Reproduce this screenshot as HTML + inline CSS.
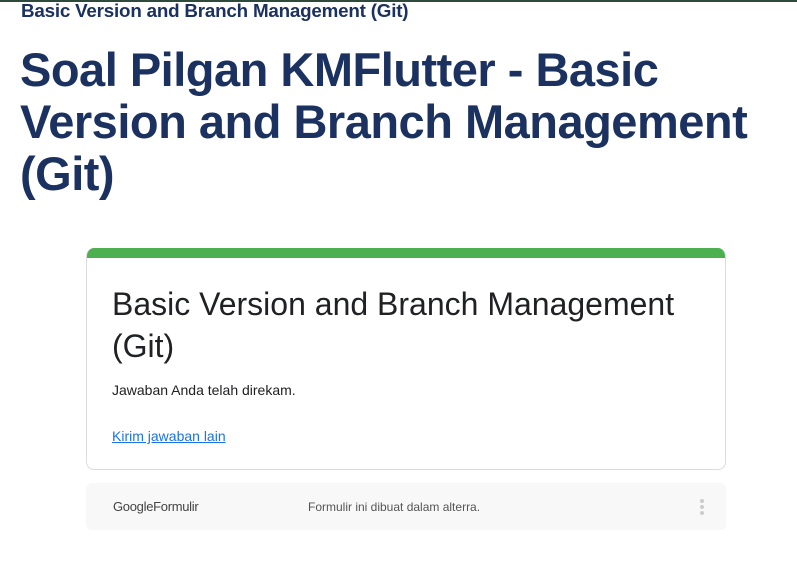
<!DOCTYPE html>
<html><head><meta charset="utf-8"><style>
body{margin:0;width:797px;height:566px;overflow:hidden;background:#fff;font-family:"Liberation Sans",sans-serif;position:relative}
.topline{position:absolute;left:0;top:0;width:797px;height:2px;background:#2d4a3a}
.sub{position:absolute;left:21px;top:0px;font-size:18.8px;font-weight:bold;color:#1b3160;letter-spacing:-0.2px}
.h1{position:absolute;left:20px;top:44px;font-size:47px;line-height:52px;font-weight:bold;color:#1b3160;letter-spacing:-0.5px;white-space:nowrap}
.card{position:absolute;left:86px;top:248px;width:638px;height:221px;border:1px solid #dadce0;border-radius:8px;border-top:none;overflow:hidden}
.bar{height:10px;background:#4caf50}
.ct{position:absolute;left:25px;top:35px;font-size:32px;line-height:42px;color:#202124;white-space:nowrap}
.msg{position:absolute;left:25px;top:134px;font-size:14px;color:#202124}
.lnk{position:absolute;left:25px;top:180px;font-size:14px;color:#1a73e8;text-decoration:underline}
.foot{position:absolute;left:86px;top:483px;width:640px;height:47px;background:#f8f8f8;border-radius:6px}
.g{position:absolute;left:27px;top:16px;font-size:13px;color:#444;letter-spacing:-0.3px}
.f{position:absolute;left:222px;top:17px;font-size:12px;color:#555}
.dots{position:absolute;left:614px;top:16px;width:4px}
.dots i{display:block;width:4px;height:4px;border-radius:2px;background:#ccc;margin-bottom:2px}
</style></head><body>
<div class="topline"></div>
<div class="sub">Basic Version and Branch Management (Git)</div>
<div class="h1">Soal Pilgan KMFlutter - Basic<br>Version and Branch Management<br>(Git)</div>
<div class="card"><div class="bar"></div>
<div class="ct">Basic Version and Branch Management<br>(Git)</div>
<div class="msg">Jawaban Anda telah direkam.</div>
<div class="lnk">Kirim jawaban lain</div>
</div>
<div class="foot"><div class="g">Google<span>Formulir</span></div><div class="f">Formulir ini dibuat dalam alterra.</div><div class="dots"><i></i><i></i><i></i></div></div>
</body></html>
